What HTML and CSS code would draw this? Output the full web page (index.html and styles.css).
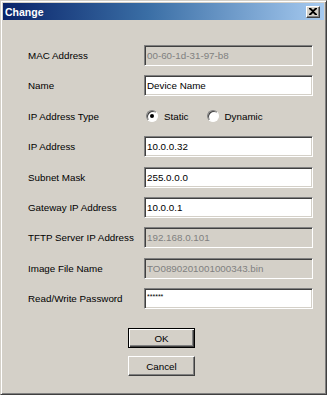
FILE: index.html
```html
<!DOCTYPE html>
<html>
<head>
<meta charset="utf-8">
<link rel="stylesheet" href="styles.css">
</head>
<body>
<div class="window">
  <div class="titlebar">
    <span class="title">Change</span>
    <span class="close">
      <svg width="8" height="7" viewBox="0 0 8 7"><path d="M0 0h2l2 2 2-2h2v1L5 3.5 8 6v1H6L4 5 2 7H0V6l3-2.5L0 1z" fill="#000"/></svg>
    </span>
  </div>
  <div class="content">
    <div class="form">
      <div class="row"><span class="label">MAC Address</span><input class="field disabled" value="00-60-1d-31-97-b8" disabled></div>
      <div class="row"><span class="label">Name</span><input class="field" value="Device Name"></div>
      <div class="row">
        <span class="label">IP Address Type</span>
        <span class="radios">
          <span class="radio-item"><span class="radio checked"></span><span>Static</span></span>
          <span class="radio-item second"><span class="radio"></span><span>Dynamic</span></span>
        </span>
      </div>
      <div class="row"><span class="label">IP Address</span><input class="field" value="10.0.0.32"></div>
      <div class="row"><span class="label">Subnet Mask</span><input class="field" value="255.0.0.0"></div>
      <div class="row"><span class="label">Gateway IP Address</span><input class="field" value="10.0.0.1"></div>
      <div class="row"><span class="label">TFTP Server IP Address</span><input class="field disabled" value="192.168.0.101" disabled></div>
      <div class="row"><span class="label">Image File Name</span><input class="field disabled" value="TO0890201001000343.bin" disabled></div>
      <div class="row"><span class="label">Read/Write Password</span><input class="field password" value="******"></div>
    </div>
    <div class="buttons">
      <button class="btn default">OK</button>
      <button class="btn">Cancel</button>
    </div>
  </div>
</div>
</body>
</html>
```

FILE: styles.css
```css
html, body {
  margin: 0;
  padding: 0;
  background: #d4d0c8;
}
body {
  font-family: "Liberation Sans", Arial, sans-serif;
  font-size: 9.8px;
  color: #000;
}
.window {
  width: 327px;
  height: 395px;
  box-sizing: border-box;
  background: #d4d0c8;
  border: 1px solid;
  border-color: #d4d0c8 #404040 #404040 #d4d0c8;
  box-shadow: inset 1px 1px #ffffff, inset -1px -1px #808080;
  padding: 2px;
  display: flex;
  flex-direction: column;
}
.titlebar {
  height: 17px;
  background: linear-gradient(to right, #0a246a 0%, #3a6ea5 45%, #a6caf0 100%);
  display: flex;
  align-items: center;
  justify-content: space-between;
  padding: 0 4px 0 2px;
}
.title {
  color: #fff;
  font-weight: bold;
  font-size: 10.5px;
}
.close {
  width: 14px;
  height: 12px;
  box-sizing: border-box;
  background: #d4d0c8;
  border: 1px solid;
  border-color: #ffffff #404040 #404040 #ffffff;
  box-shadow: inset -1px -1px #808080;
  display: flex;
  align-items: center;
  justify-content: center;
}
.close svg { display: block; }
.content {
  padding: 25px 0 0 25px;
  display: flex;
  flex-direction: column;
}
.form {
  display: flex;
  flex-direction: column;
  gap: 9.4px;
}
.row {
  height: 21px;
  display: flex;
  align-items: center;
}
.label {
  width: 116px;
  flex: none;
}
.field {
  width: 169px;
  height: 21px;
  box-sizing: border-box;
  margin: 0;
  padding: 0 0 0 2px;
  font-family: "Liberation Sans", Arial, sans-serif;
  font-size: 9.8px;
  color: #000;
  background: #fff;
  border: 1px solid;
  border-color: #808080 #ffffff #ffffff #808080;
  box-shadow: inset 1px 1px #404040, inset -1px -1px #d4d0c8;
  outline: none;
  -webkit-appearance: none;
  appearance: none;
}
.field.disabled {
  background: #d4d0c8;
  color: #808080;
  -webkit-text-fill-color: #808080;
  opacity: 1;
}
.field.password {
  font-size: 7px;
  padding-bottom: 4px;
  letter-spacing: 0;
}
.radios {
  display: flex;
  align-items: center;
  padding-left: 2px;
}
.radio-item {
  display: flex;
  align-items: center;
  gap: 6px;
}
.radio-item.second {
  margin-left: 18px;
}
.radio {
  width: 12px;
  height: 12px;
  box-sizing: border-box;
  border-radius: 50%;
  background: #fff;
  border: 1px solid;
  border-color: #808080 #ffffff #ffffff #808080;
  box-shadow: inset 1px 1px #404040;
  display: flex;
  align-items: center;
  justify-content: center;
}
.radio.checked::after {
  content: "";
  width: 4px;
  height: 4px;
  border-radius: 50%;
  background: #000;
}
.buttons {
  margin-top: 19px;
  margin-left: 100px;
  display: flex;
  flex-direction: column;
  gap: 8px;
}
.btn {
  width: 67px;
  height: 20px;
  box-sizing: border-box;
  margin: 0;
  padding: 0;
  font-family: "Liberation Sans", Arial, sans-serif;
  font-size: 9.8px;
  color: #000;
  background: #d4d0c8;
  border: 1px solid;
  border-color: #ffffff #404040 #404040 #ffffff;
  box-shadow: inset -1px -1px #808080, inset 1px 1px #d4d0c8;
  -webkit-appearance: none;
  appearance: none;
}
.btn.default {
  border: 1px solid #000;
  box-shadow: inset 1px 1px #ffffff, inset -1px -1px #404040, inset -2px -2px #808080;
}
```
